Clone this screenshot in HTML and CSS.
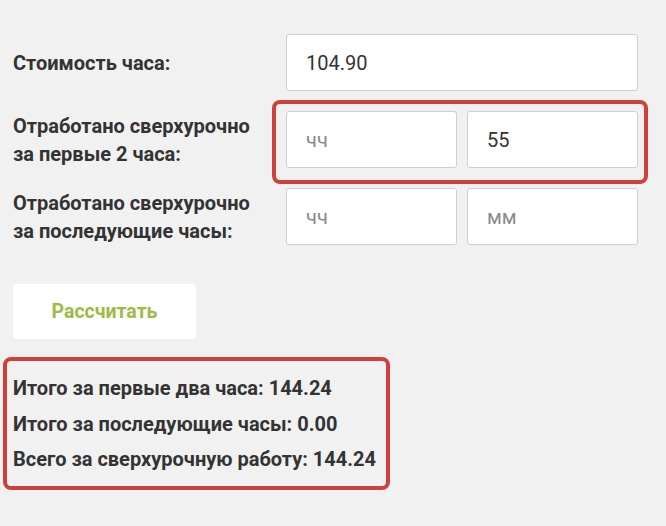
FILE: index.html
```html
<!DOCTYPE html>
<html lang="ru">
<head>
<meta charset="utf-8">
<link rel="stylesheet" href="styles.css">
</head>
<body>
<div class="calc">
  <div class="row row-first">
    <div class="label">Стоимость часа:</div>
    <div class="fields">
      <div class="input value">104.90</div>
    </div>
  </div>
  <div class="row">
    <div class="label">Отработано сверхурочно<br>за первые 2 часа:</div>
    <div class="fields two marked">
      <div class="input placeholder">чч</div>
      <div class="input value">55</div>
    </div>
  </div>
  <div class="row">
    <div class="label">Отработано сверхурочно<br>за последующие часы:</div>
    <div class="fields two">
      <div class="input placeholder">чч</div>
      <div class="input placeholder">мм</div>
    </div>
  </div>
  <button class="btn">Рассчитать</button>
  <div class="results">
    <div class="line">Итого за первые два часа: 144.24</div>
    <div class="line">Итого за последующие часы: 0.00</div>
    <div class="line">Всего за сверхурочную работу: 144.24</div>
  </div>
</div>
</body>
</html>
```
FILE: styles.css
```css
html, body {
  margin: 0;
  padding: 0;
  background: #f1f1f1;
}
body {
  font-family: Roboto, "Noto Sans", sans-serif;
  color: #333;
}
.calc {
  padding: 34px 0 0 13px;
  width: 625px;
  display: flex;
  flex-direction: column;
}
.row {
  display: grid;
  grid-template-columns: 273px 352px;
  align-items: center;
  margin-bottom: 20px;
}
.label {
  font-weight: 700;
  font-size: 20px;
  line-height: 28px;
  color: #333;
  white-space: nowrap;
}
.fields {
  display: grid;
  grid-template-columns: 1fr;
  gap: 10px;
}
.fields.two {
  grid-template-columns: 1fr 1fr;
}
.marked {
  position: relative;
}
.marked::after {
  content: "";
  position: absolute;
  left: -14px;
  right: -10px;
  top: -11px;
  bottom: -16px;
  border: 4px solid #d0403a;
  border-radius: 8px;
  pointer-events: none;
}
.input {
  box-sizing: border-box;
  height: 57px;
  background: #fff;
  border: 1px solid #cfcfcf;
  border-radius: 3px;
  padding: 0 19px;
  display: flex;
  align-items: center;
  font-size: 20px;
}
.value { color: #333; }
.placeholder { color: #8a8a8a; }
.btn {
  align-self: flex-start;
  margin-top: 19px;
  width: 183px;
  height: 55px;
  background: #fff;
  border: none;
  border-radius: 4px;
  font-family: Roboto, "Noto Sans", sans-serif;
  font-weight: 700;
  font-size: 19.5px;
  color: #9dbb45;
}
.results {
  align-self: flex-start;
  margin: 18px 0 0 -10px;
  border: 4px solid #d0403a;
  border-radius: 8px;
  padding: 10px 10px 8px 6px;
}
.line {
  font-weight: 700;
  font-size: 20px;
  line-height: 35.5px;
  color: #333;
  white-space: nowrap;
}
```
